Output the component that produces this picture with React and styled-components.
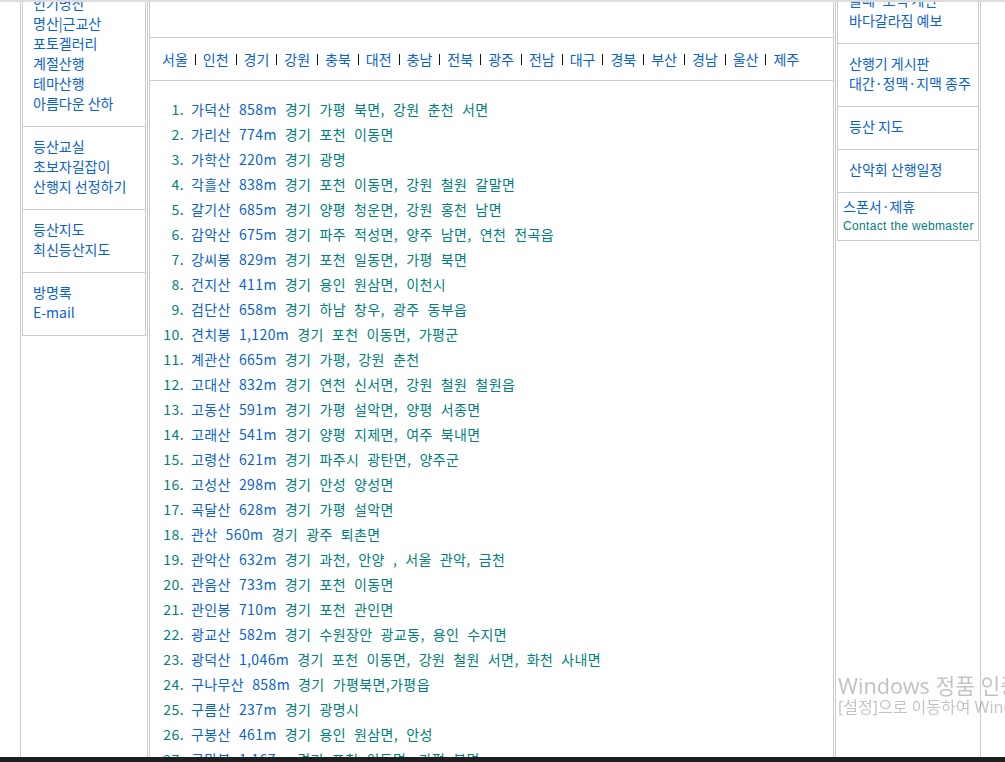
import React from 'react'
import styled, { createGlobalStyle } from 'styled-components'

const GlobalStyle = createGlobalStyle`
  html, body {
    margin: 0;
    padding: 0;
    overflow: hidden;
    background: #fff;
  }
  body {
    font-family: "Noto Sans CJK KR", sans-serif;
    font-size: 14px;
  }
  a { text-decoration: none; }
`

const leftMenu = [
  ['명산 100선', '인기명산', '명산|근교산', '포토겔러리', '계절산행', '테마산행', '아름다운 산하'],
  ['등산교실', '초보자길잡이', '산행지 선정하기'],
  ['등산지도', '최신등산지도'],
  ['방명록', 'E-mail'],
]

const rightMenu = [
  ['산행 날씨', '물때·조석 계산', '바다갈라짐 예보'],
  ['산행기 게시판', '대간·정맥·지맥 종주'],
  ['등산 지도'],
  ['산악회 산행일정'],
]

const regions = ['서울', '인천', '경기', '강원', '충북', '대전', '충남', '전북', '광주', '전남', '대구', '경북', '부산', '경남', '울산', '제주']

const mountains = [
  ['가덕산 858m', '경기 가평 북면, 강원 춘천 서면'],
  ['가리산 774m', '경기 포천 이동면'],
  ['가학산 220m', '경기 광명'],
  ['각흘산 838m', '경기 포천 이동면, 강원 철원 갈말면'],
  ['갈기산 685m', '경기 양평 청운면, 강원 홍천 남면'],
  ['감악산 675m', '경기 파주 적성면, 양주 남면, 연천 전곡읍'],
  ['강씨봉 829m', '경기 포천 일동면, 가평 북면'],
  ['건지산 411m', '경기 용인 원삼면, 이천시'],
  ['검단산 658m', '경기 하남 창우, 광주 동부읍'],
  ['견치봉 1,120m', '경기 포천 이동면, 가평군'],
  ['계관산 665m', '경기 가평, 강원 춘천'],
  ['고대산 832m', '경기 연천 신서면, 강원 철원 철원읍'],
  ['고동산 591m', '경기 가평 설악면, 양평 서종면'],
  ['고래산 541m', '경기 양평 지제면, 여주 북내면'],
  ['고령산 621m', '경기 파주시 광탄면, 양주군'],
  ['고성산 298m', '경기 안성 양성면'],
  ['곡달산 628m', '경기 가평 설악면'],
  ['관산 560m', '경기 광주 퇴촌면'],
  ['관악산 632m', '경기 과천, 안양 , 서울 관악, 금천'],
  ['관음산 733m', '경기 포천 이동면'],
  ['관인봉 710m', '경기 포천 관인면'],
  ['광교산 582m', '경기 수원장안 광교동, 용인 수지면'],
  ['광덕산 1,046m', '경기 포천 이동면, 강원 철원 서면, 화천 사내면'],
  ['구나무산 858m', '경기 가평북면,가평읍'],
  ['구름산 237m', '경기 광명시'],
  ['구봉산 461m', '경기 용인 원삼면, 안성'],
  ['국망봉 1,167m', '경기 포천 이동면, 가평 북면'],
]

function App() {
  return (<>
    <GlobalStyle />
    <TopEdge />
    <Page>
      <SideCol $top={3} $width={128}>
        <MenuBox>
          {leftMenu.map((group, i) => (
            <Group key={i} $pl={10}>
              {group.map(item => <NavLink key={item} href="#">{item}</NavLink>)}
            </Group>
          ))}
        </MenuBox>
      </SideCol>

      <Main>
        <MainTop />
        <RegionBar>
          {regions.map((r, i) => (
            <React.Fragment key={r}>
              {i > 0 && <Sep />}
              <RegionLink href="#">{r}</RegionLink>
            </React.Fragment>
          ))}
        </RegionBar>
        <List>
          {mountains.map(([name, place], i) => (
            <Item key={name}>
              <Num>{i + 1}.</Num>
              <NameLink href="#">{name}</NameLink> {place}
            </Item>
          ))}
        </List>
      </Main>

      <SideCol $top={0} $width={146}>
        <MenuBox>
          {rightMenu.map((group, i) => (
            <Group key={i} $pl={11}>
              {group.map(item => <NavLink key={item} href="#">{item}</NavLink>)}
            </Group>
          ))}
          <Group $pl={5} $pt={3} $pb={4}>
            <NavLink href="#">스폰서·제휴</NavLink>
            <Contact href="#">Contact the webmaster</Contact>
          </Group>
        </MenuBox>
      </SideCol>
    </Page>

    <Watermark>
      <WmTitle>Windows 정품 인증</WmTitle>
      <WmText>[설정]으로 이동하여 Windows를 정품 인증합니다.</WmText>
    </Watermark>
    <Taskbar />
  </>)
}

export default App

const TopEdge = styled.div`
  position: fixed;
  top: 0;
  left: 0;
  right: 0;
  height: 2px;
  background: #dcdcdc;
  z-index: 5;
`

const Page = styled.div`
  display: flex;
  align-items: stretch;
  width: 961px;
  margin: -40px 0 0 20px;
`

const SideCol = styled.div`
  box-sizing: border-box;
  width: ${p => p.$width}px;
  flex: none;
  padding: ${p => p.$top}px 1px 0;
  border-left: 1px solid #cccccc;
  border-right: 1px solid #cccccc;
`

const MenuBox = styled.div`
  border: 1px solid #cccccc;
`

const Group = styled.div`
  padding: ${p => p.$pt ?? 9}px 0 ${p => p.$pb ?? 13}px ${p => p.$pl}px;
  & + & {
    border-top: 1px solid #cccccc;
  }
`

const NavLink = styled.a`
  display: block;
  line-height: 20px;
  color: #0a62cf;
  white-space: nowrap;
`

const Contact = styled.a`
  display: block;
  line-height: 20px;
  font-family: "Liberation Sans", sans-serif;
  font-size: 12px;
  letter-spacing: 0.35px;
  color: #00807a;
  white-space: nowrap;
`

const Main = styled.div`
  box-sizing: border-box;
  width: 685px;
  flex: none;
  margin: 0 1px;
  border-left: 1px solid #cccccc;
  border-right: 1px solid #cccccc;
`

const MainTop = styled.div`
  height: 77px;
  border-bottom: 1px solid #cccccc;
`

const RegionBar = styled.div`
  display: flex;
  align-items: center;
  height: 42px;
  padding-left: 12px;
  border-bottom: 1px solid #cccccc;
`

const RegionLink = styled.a`
  color: #0a62cf;
  line-height: 20px;
`

const Sep = styled.span`
  display: inline-block;
  width: 1px;
  height: 11px;
  margin: 1px 7px 0;
  background: #111;
`

const List = styled.ol`
  list-style: none;
  margin: 16px 0 0;
  padding: 0;
  color: #00807a;
  line-height: 25px;
  letter-spacing: 0.4px;
  word-spacing: 4.5px;
`

const Item = styled.li`
  white-space: nowrap;
`

const Num = styled.span`
  display: inline-block;
  width: 34px;
  margin-right: 7px;
  text-align: right;
  word-spacing: 0;
`

const NameLink = styled.a`
  color: #0a62cf;
`

const Watermark = styled.div`
  position: fixed;
  left: 838px;
  right: 0;
  top: 673px;
  overflow: hidden;
  white-space: nowrap;
  font-family: "Noto Sans", "Noto Sans CJK KR", sans-serif;
  color: rgba(0, 0, 0, 0.24);
  pointer-events: none;
`

const WmTitle = styled.div`
  font-size: 21.5px;
  line-height: 25px;
`

const WmText = styled.div`
  font-size: 16px;
  line-height: 19px;
`

const Taskbar = styled.div`
  position: fixed;
  left: 0;
  right: 0;
  bottom: 0;
  height: 5px;
  background: #1e1e1e;
`
